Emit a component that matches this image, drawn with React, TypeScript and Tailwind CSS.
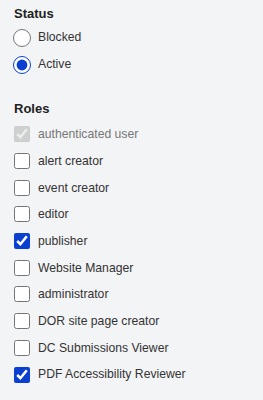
import React from "react";

const roles = [
  { label: "authenticated user", checked: true, disabled: true },
  { label: "alert creator", checked: false },
  { label: "event creator", checked: false },
  { label: "editor", checked: false },
  { label: "publisher", checked: true },
  { label: "Website Manager", checked: false },
  { label: "administrator", checked: false },
  { label: "DOR site page creator", checked: false },
  { label: "DC Submissions Viewer", checked: false },
  { label: "PDF Accessibility Reviewer", checked: true },
];

const App = () => {
  return (
    <div
      className="min-h-[400px] w-[263px] bg-[#f3f4f6] pl-[14px] pt-[5px] text-[12.2px] text-[#333333]"
      style={{ fontFamily: '"Liberation Sans", Arial, sans-serif' }}
    >
      <fieldset>
        <legend className="mb-[2px] h-[17px] text-[13px] leading-[17px] font-bold text-[#222222]">
          Status
        </legend>
        <div className="flex flex-col">
          <label className="flex h-[27px] items-center gap-[7px]">
            <input
              type="radio"
              name="status"
              className="m-0 -ml-[1px] h-[18px] w-[18px] accent-[#0b3fd0]"
            />
            <span>Blocked</span>
          </label>
          <label className="flex h-[27px] items-center gap-[7px]">
            <input
              type="radio"
              name="status"
              defaultChecked
              className="m-0 -ml-[1px] h-[18px] w-[18px] accent-[#0b3fd0]"
            />
            <span>Active</span>
          </label>
        </div>
      </fieldset>

      <fieldset className="mt-[22px]">
        <legend className="mb-[4px] h-[17px] text-[13px] leading-[17px] font-bold text-[#222222]">
          Roles
        </legend>
        <div className="flex flex-col">
          {roles.map((role) => (
            <label
              key={role.label}
              className={`flex h-[26.7px] items-center gap-[8px] ${
                role.disabled ? "text-[#777777]" : ""
              }`}
            >
              <input
                type="checkbox"
                defaultChecked={role.checked}
                disabled={role.disabled}
                className="m-0 h-[16px] w-[16px] accent-[#0b3fd0]"
              />
              <span>{role.label}</span>
            </label>
          ))}
        </div>
      </fieldset>
    </div>
  );
};

export default App;
